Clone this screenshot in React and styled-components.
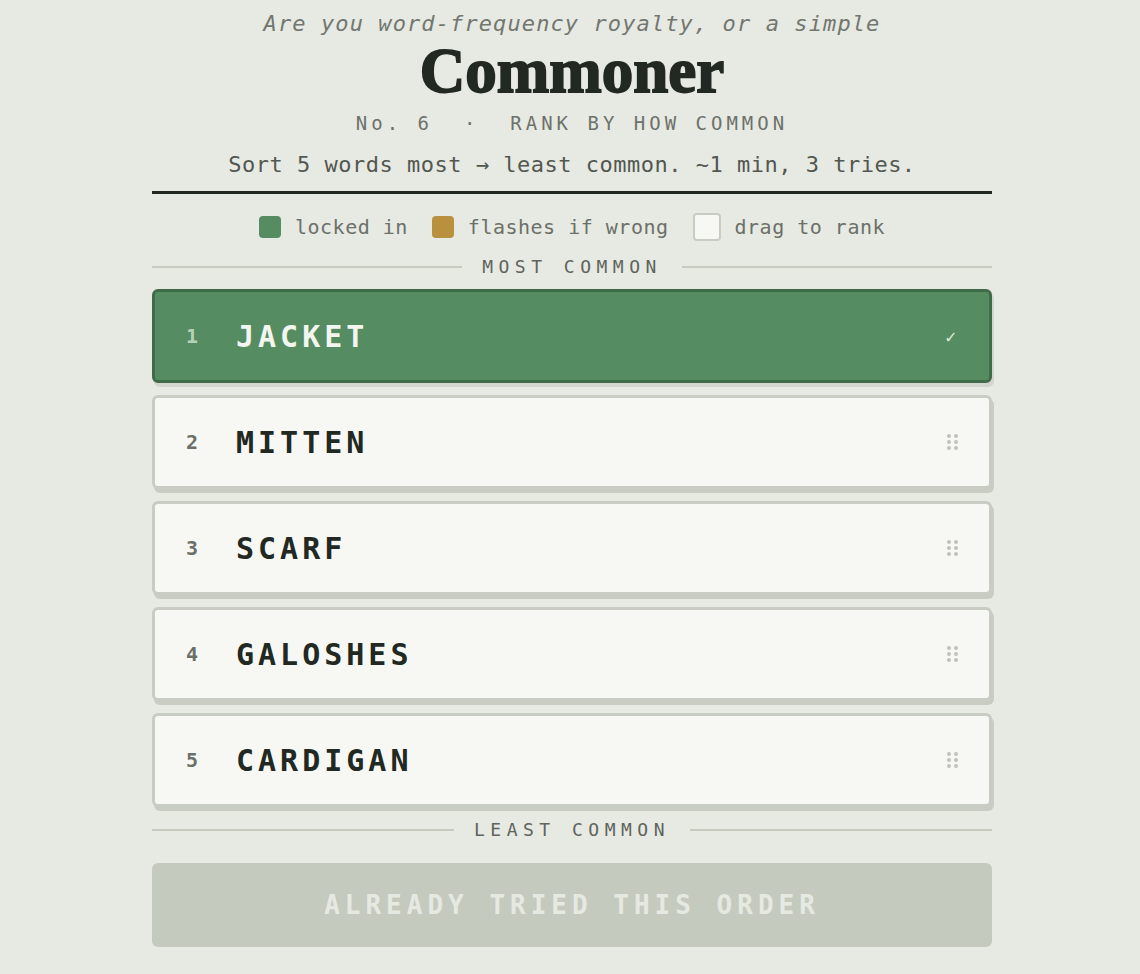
import styled, { createGlobalStyle } from 'styled-components';

const GlobalStyle = createGlobalStyle`
  body {
    margin: 0;
    background: #e7e9e3;
    font-family: "DejaVu Sans Mono", "Liberation Mono", monospace;
    color: #222822;
  }
`;

const words = ['JACKET', 'MITTEN', 'SCARF', 'GALOSHES', 'CARDIGAN'];

export default function App() {
  return (
    <>
      <GlobalStyle />
      <Page>
        <Header>
          <Tagline>Are you word-frequency royalty, or a simple</Tagline>
          <Title>Commoner</Title>
          <Meta>No. 6{'\u00a0\u00a0'}·{'\u00a0\u00a0'}RANK BY HOW COMMON</Meta>
          <Intro>Sort 5 words most → least common. ~1 min, 3 tries.</Intro>
        </Header>
        <Legend>
          <LegendItem>
            <Swatch $kind="locked" />
            locked in
          </LegendItem>
          <LegendItem>
            <Swatch $kind="wrong" />
            flashes if wrong
          </LegendItem>
          <LegendItem>
            <Swatch $kind="drag" />
            drag to rank
          </LegendItem>
        </Legend>
        <Divider>
          <span>MOST COMMON</span>
        </Divider>
        <List>
          {words.map((word, i) => {
            const locked = i === 0;
            return (
              <Card key={word} $locked={locked}>
                <Rank $locked={locked}>{i + 1}</Rank>
                <Word $locked={locked}>{word}</Word>
                {locked ? (
                  <Check>✓</Check>
                ) : (
                  <Grip>
                    {Array.from({ length: 6 }).map((_, d) => (
                      <i key={d} />
                    ))}
                  </Grip>
                )}
              </Card>
            );
          })}
        </List>
        <Divider>
          <span>LEAST COMMON</span>
        </Divider>
        <SubmitButton disabled>ALREADY TRIED THIS ORDER</SubmitButton>
      </Page>
    </>
  );
}

const Page = styled.div`
  width: 840px;
  margin: 0 auto;
  padding: 9px 0 0 4px;
  display: flex;
  flex-direction: column;
`;

const Header = styled.header`
  display: flex;
  flex-direction: column;
  align-items: center;
  padding-bottom: 11px;
  border-bottom: 3px solid #222822;
`;

const Tagline = styled.p`
  margin: 0;
  font-size: 22px;
  line-height: 30px;
  font-style: italic;
  letter-spacing: 1.1px;
  color: #72776f;
`;

const Title = styled.h1`
  margin: 0;
  font-family: "Liberation Serif", "DejaVu Serif", serif;
  font-weight: 900;
  font-size: 63px;
  line-height: 64px;
  letter-spacing: 0;
  -webkit-text-stroke: 1.8px #222822;
  color: #222822;
`;

const Meta = styled.p`
  margin: 7px 0 0;
  font-size: 19px;
  line-height: 26px;
  letter-spacing: 4px;
  color: #6d726a;
`;

const Intro = styled.p`
  margin: 14px 0 0;
  font-size: 22px;
  line-height: 30px;
  letter-spacing: 0.5px;
  color: #52574f;
`;

const Legend = styled.div`
  display: flex;
  justify-content: center;
  align-items: center;
  gap: 24px;
  margin: 19px 0 3px;
`;

const LegendItem = styled.div`
  display: flex;
  align-items: center;
  gap: 14px;
  font-size: 20px;
  letter-spacing: 0.5px;
  color: #6b7068;
`;

const swatchColors = {
  locked: '#568c62',
  wrong: '#b8903e',
  drag: '#f7f8f4',
};

const Swatch = styled.span`
  width: ${p => (p.$kind === 'drag' ? '24px' : '22px')};
  height: ${p => (p.$kind === 'drag' ? '24px' : '22px')};
  border-radius: 4px;
  background: ${p => swatchColors[p.$kind]};
  border: ${p => (p.$kind === 'drag' ? '2px solid #c8ccc2' : 'none')};
`;

const Divider = styled.div`
  display: flex;
  align-items: center;
  gap: 20px;
  margin-top: 11px;
  font-size: 18px;
  line-height: 24px;
  letter-spacing: 5.5px;
  color: #5f645c;

  &::before,
  &::after {
    content: '';
    flex: 1;
    height: 2px;
    background: #c7cabf;
  }
`;

const List = styled.div`
  display: flex;
  flex-direction: column;
  gap: 12px;
  margin-top: 10px;
`;

const Card = styled.div`
  display: flex;
  align-items: center;
  height: 94px;
  box-sizing: border-box;
  padding: 0 31px;
  border-radius: 6px;
  border: 3px solid ${p => (p.$locked ? '#3f6b48' : '#c8ccc2')};
  background: ${p => (p.$locked ? '#568c62' : '#f7f8f4')};
  box-shadow: 2px 4px 0 ${p => (p.$locked ? '#d3d6ce' : '#c9ccc3')};
`;

const Rank = styled.span`
  width: 50px;
  font-size: 20px;
  font-weight: bold;
  color: ${p => (p.$locked ? '#b6d3ba' : '#6b6f68')};
`;

const Word = styled.span`
  flex: 1;
  font-size: 30px;
  font-weight: bold;
  letter-spacing: 4px;
  color: ${p => (p.$locked ? '#f3f6ef' : '#222822')};
`;

const Check = styled.span`
  font-size: 18px;
  color: #d8ead9;
  margin-right: 2px;
`;

const Grip = styled.span`
  display: grid;
  grid-template-columns: repeat(2, 4px);
  gap: 2px 3px;

  i {
    width: 4px;
    height: 4px;
    border-radius: 50%;
    background: #bfc3ba;
  }
`;

const SubmitButton = styled.button`
  margin-top: 21px;
  height: 84px;
  border: none;
  border-radius: 6px;
  background: #c5cabe;
  color: #e6e9e2;
  font-family: "DejaVu Sans Mono", "Liberation Mono", monospace;
  font-size: 26px;
  font-weight: bold;
  letter-spacing: 5px;
`;
